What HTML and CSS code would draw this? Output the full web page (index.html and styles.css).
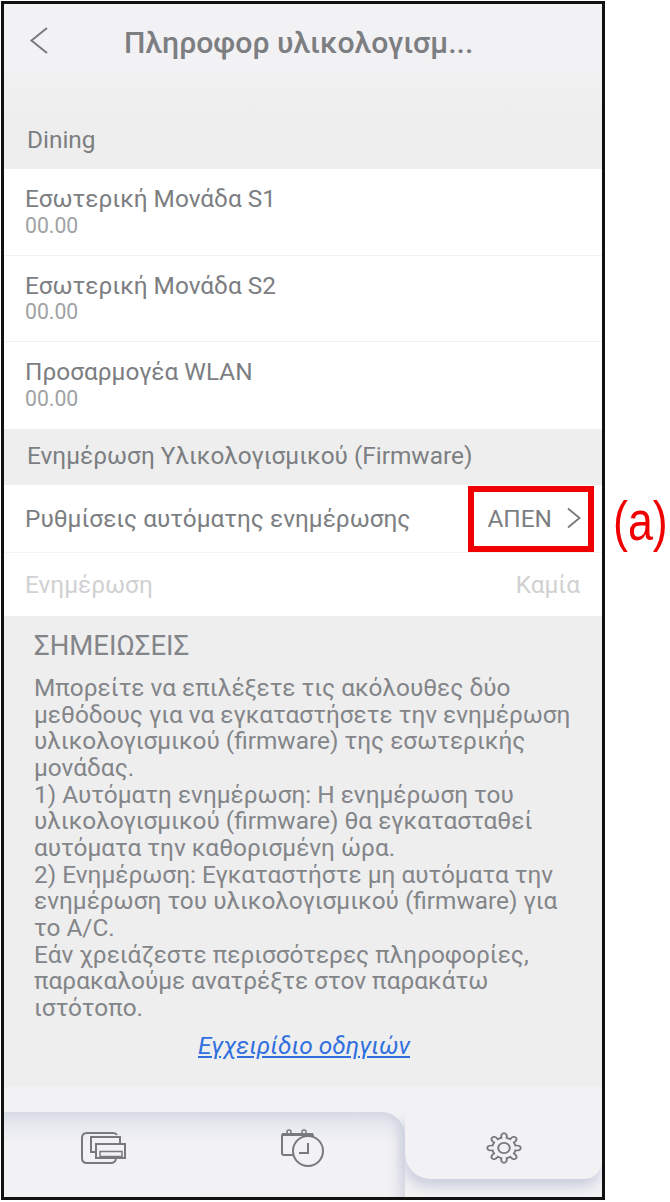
FILE: index.html
```html
<!DOCTYPE html>
<html lang="el">
<head>
    <meta charset="UTF-8">
    <meta name="viewport" content="width=device-width, initial-scale=1.0">
    <title>Πληροφορίες υλικολογισμικού</title>
    <link rel="stylesheet" href="styles.css">
</head>
<body>
    <div class="shot">
        <div class="phone">
            <header class="topbar">
                <svg class="back" width="20" height="28" viewBox="0 0 20 28"><path d="M18 1 L2.5 13.5 L18 26" fill="none" stroke="#77797d" stroke-width="2"/></svg>
                <h1>Πληροφορ υλικολογισμ...</h1>
            </header>

            <div class="section section-first">Dining</div>
            <div class="row">
                <div class="row-name">Εσωτερική Μονάδα S1</div>
                <div class="row-value">00.00</div>
            </div>
            <div class="row">
                <div class="row-name">Εσωτερική Μονάδα S2</div>
                <div class="row-value">00.00</div>
            </div>
            <div class="row row-last">
                <div class="row-name">Προσαρμογέα WLAN</div>
                <div class="row-value">00.00</div>
            </div>

            <div class="section">Ενημέρωση Υλικολογισμικού (Firmware)</div>
            <div class="line line-auto">
                <span>Ρυθμίσεις αυτόματης ενημέρωσης</span>
                <span class="line-right">ΑΠΕΝ
                    <svg width="16" height="22" viewBox="0 0 16 22"><path d="M2 1.5 L13.5 11 L2 20.5" fill="none" stroke="#77797d" stroke-width="1.8"/></svg>
                </span>
            </div>
            <div class="line line-off">
                <span>Ενημέρωση</span>
                <span>Καμία</span>
            </div>

            <section class="notes">
                <h2>ΣΗΜΕΙΩΣΕΙΣ</h2>
                <p>Μπορείτε να επιλέξετε τις ακόλουθες δύο<br>μεθόδους για να εγκαταστήσετε την ενημέρωση<br>υλικολογισμικού (firmware) της εσωτερικής<br>μονάδας.<br>1) Αυτόματη ενημέρωση: Η ενημέρωση του<br>υλικολογισμικού (firmware) θα εγκατασταθεί<br>αυτόματα την καθορισμένη ώρα.<br>2) Ενημέρωση: Εγκαταστήστε μη αυτόματα την<br>ενημέρωση του υλικολογισμικού (firmware) για<br>το A/C.<br>Εάν χρειάζεστε περισσότερες πληροφορίες,<br>παρακαλούμε ανατρέξτε στον παρακάτω<br>ιστότοπο.</p>
                <a class="manual" href="#">Εγχειρίδιο οδηγιών</a>
            </section>

            <div class="spacer"></div>

            <nav class="tabs">
                <div class="tab tab-left">
                    <svg width="46" height="32" viewBox="0 0 46 32" fill="none" stroke="#77797d" stroke-width="2">
                        <path d="M36 3 Q35 1 32 1 H6 Q1 1 1 6 V26 Q1 31 6 31 H30 Q34 31 35 27"/>
                        <rect x="10" y="5" width="29" height="15" fill="#f2f2f4"/>
                        <rect x="15" y="12" width="29" height="14" fill="#f2f2f4"/>
                        <rect x="19" y="19.5" width="22" height="5" stroke-width="1.5"/>
                    </svg>
                </div>
                <div class="tab tab-mid">
                    <svg width="46" height="40" viewBox="0 0 46 40" fill="none" stroke="#77797d" stroke-width="2">
                        <path d="M14 27 H4 Q2 27 2 25 V8 Q2 6 4 6 H31 Q33 6 33 8 V10"/>
                        <path d="M2 6.5 H33" stroke-width="3"/>
                        <circle cx="9" cy="4" r="2" fill="#f2f2f4" stroke-width="1.5"/>
                        <circle cx="24" cy="4" r="2" fill="#f2f2f4" stroke-width="1.5"/>
                        <circle cx="28" cy="23" r="15" fill="#f2f2f4"/>
                        <path d="M28 15 V25 H19"/>
                    </svg>
                </div>
                <div class="tab tab-on">
                    <svg width="36" height="32" viewBox="-18.5 -18.5 37 37" preserveAspectRatio="none" fill="none" stroke="#77797d" stroke-width="2">
                        <circle r="6"/>
                        <path d="M-2.7 -11.7 C-4.2 -19 4.2 -19 2.7 -11.7 A12 12 0 0 1 6.36 -10.18 C10.47 -16.4 16.4 -10.47 10.18 -6.36 A12 12 0 0 1 11.7 -2.7 C19 -4.2 19 4.2 11.7 2.7 A12 12 0 0 1 10.18 6.36 C16.4 10.47 10.47 16.4 6.36 10.18 A12 12 0 0 1 2.7 11.7 C4.2 19 -4.2 19 -2.7 11.7 A12 12 0 0 1 -6.36 10.18 C-10.47 16.4 -16.4 10.47 -10.18 6.36 A12 12 0 0 1 -11.7 2.7 C-19 4.2 -19 -4.2 -11.7 -2.7 A12 12 0 0 1 -10.18 -6.36 C-16.4 -10.47 -10.47 -16.4 -6.36 -10.18 A12 12 0 0 1 -2.7 -11.7 Z"/>
                    </svg>
                </div>
            </nav>
        </div>

        <div class="callout-box"></div>
        <div class="callout-label">(a)</div>
    </div>
</body>
</html>
```

FILE: styles.css
```css
html, body {
    margin: 0;
    padding: 0;
    background-color: #fff;
}

body {
    font-family: Roboto, "Noto Sans", sans-serif;
    color: #7c7e82;
}

.shot {
    position: relative;
    width: 670px;
    height: 1202px;
    overflow: hidden;
}

.phone {
    box-sizing: border-box;
    width: 604px;
    height: 1199px;
    margin: 1px 0 0 1px;
    border: 3px solid #111;
    display: flex;
    flex-direction: column;
    background-color: #f2f2f4;
}

.topbar {
    height: 122px;
    flex-shrink: 0;
    display: flex;
    align-items: flex-start;
    background: linear-gradient(#f2f2f4 60px, #eeeeee 115px);
}

.back {
    margin: 23px 0 0 25px;
}

.topbar h1 {
    margin: 19px 0 0 75px;
    font-size: 30.2px;
    line-height: 40px;
    font-weight: 500;
    white-space: nowrap;
}

.section {
    height: 56px;
    flex-shrink: 0;
    box-sizing: border-box;
    padding: 13px 0 0 23px;
    background-color: #eeeeee;
    font-size: 24.4px;
    line-height: 28px;
}

.section-first {
    height: 43px;
    padding-top: 0;
}

.row {
    height: 86.67px;
    flex-shrink: 0;
    box-sizing: border-box;
    padding: 16px 0 0 21px;
    background-color: #fff;
    border-bottom: 1px solid #f1f1f1;
}

.row-last {
    border-bottom: none;
}

.row-name {
    font-size: 24.4px;
    line-height: 28px;
}

.row-value {
    margin-top: 0.5px;
    font-size: 21.2px;
    line-height: 24px;
    color: #a0a2a5;
}

.line {
    flex-shrink: 0;
    display: flex;
    justify-content: space-between;
    align-items: center;
    box-sizing: border-box;
    padding: 0 22px 0 21px;
    background-color: #fff;
    font-size: 24.4px;
}

.line-auto {
    height: 68px;
    border-bottom: 1px solid #f4f4f4;
}

.line-right {
    display: flex;
    align-items: center;
    gap: 14px;
    margin-right: -2px;
}

.line-off {
    height: 63px;
    color: #d0d1d2;
}

.notes {
    height: 471px;
    flex-shrink: 0;
    box-sizing: border-box;
    padding: 15px 0 0 30px;
    background-color: #eeeeee;
    color: #838589;
}

.notes h2 {
    margin: 0 0 14px;
    font-size: 27.5px;
    line-height: 30px;
    font-weight: 400;
}

.notes p {
    margin: 0;
    font-size: 24.4px;
    line-height: 26.67px;
    white-space: nowrap;
}

.manual {
    display: block;
    width: 540px;
    margin-top: 9px;
    text-align: center;
    color: #2f6fe0;
    font-size: 24.5px;
    line-height: 30px;
    font-style: italic;
}

.spacer {
    height: 25px;
    flex-shrink: 0;
}

.tabs {
    flex: 1;
    display: flex;
    overflow: hidden;
}

.tab {
    display: flex;
    justify-content: center;
    align-items: flex-start;
    padding-top: 20px;
    box-sizing: border-box;
}

.tab-left {
    width: 200px;
    background: linear-gradient(#d6d9e4, #e7e8ef 12px, #f2f2f4 32px);
}

.tab-mid {
    width: 201px;
    padding-top: 16px;
    padding-right: 3px;
    background: linear-gradient(#d6d9e4, #e7e8ef 12px, #f2f2f4 32px);
    border-top-right-radius: 24px;
    box-shadow: inset -16px 0 14px -12px #cdd0df;
}

.tab-on {
    flex: 1;
    height: 67px;
    border-bottom-left-radius: 26px;
    border-bottom-right-radius: 18px;
    background-color: #f2f2f4;
    box-shadow: -2px 8px 12px #ccd0df;
    position: relative;
}

.callout-box {
    position: absolute;
    left: 468px;
    top: 486px;
    width: 126px;
    height: 66px;
    box-sizing: border-box;
    border: 6px solid #f00000;
}

.callout-label {
    position: absolute;
    left: 613px;
    top: 491px;
    font-family: "Liberation Sans", Arial, sans-serif;
    font-size: 56px;
    line-height: 60px;
    color: #f00000;
    transform: scaleX(0.8);
    transform-origin: left center;
}
```
